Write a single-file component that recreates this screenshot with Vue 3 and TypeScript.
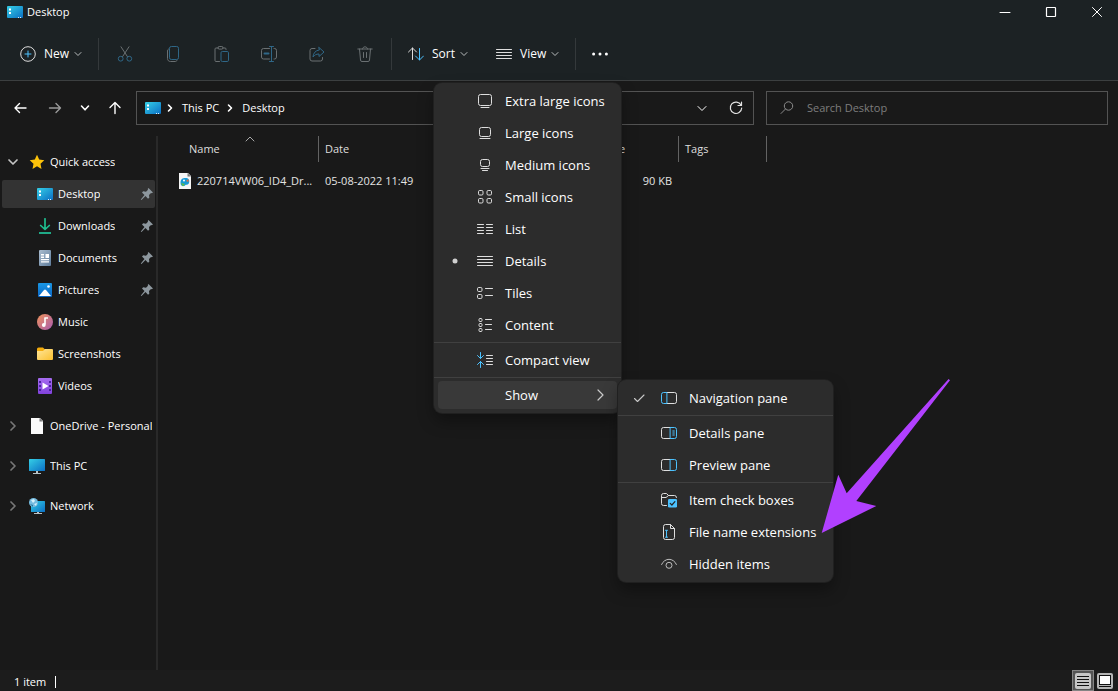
<script setup lang="ts">
import { h } from 'vue'

const W = '#dedede'
const B = '#4cc2ff'
const G = '#6a7072'
const D = '#2f6787'

const stroke = (color: string, d: string, width = 1) =>
  `<path d="${d}" fill="none" stroke="${color}" stroke-width="${width}" stroke-linecap="round" stroke-linejoin="round"/>`

const listLines = 'M.5 3.5h15M.5 6.5h15M.5 9.5h15M.5 12.5h15'

const art: Record<string, string> = {
  plus: `<circle cx="8" cy="8" r="7.3" fill="none" stroke="${W}"/>` + stroke(B, 'M8 5v6M5 8h6'),
  cut: stroke(G, 'M4 .8l6.4 9.8M12 .8L5.6 10.6') + `<circle cx="3.7" cy="12.7" r="2.4" fill="none" stroke="${D}"/><circle cx="12.3" cy="12.7" r="2.4" fill="none" stroke="${D}"/>`,
  copy: stroke(G, 'M3.500 3C2.900 3.4 2.500 4 2.500 5v7.500c0 1.8 1.200 3 3 3H10c1 0 1.700-.4 2-1') + `<rect x="4.500" y=".5" width="9" height="13" rx="1.800" fill="none" stroke="${D}"/>`,
  paste: stroke(G, 'M5.500 2H3a1 1 0 0 0-1 1v11.500a1 1 0 0 0 1 1h3.500M9.500 2H12a1 1 0 0 1 1 1v.500') + `<rect x="5" y=".5" width="5" height="2.600" rx="1.200" fill="none" stroke="${G}"/><rect x="8" y="5.500" width="7.500" height="10" rx="1.300" fill="none" stroke="${D}"/>`,
  rename: stroke(G, 'M8.500 2.500h-6a2 2 0 0 0-2 2v6.500a2 2 0 0 0 2 2h6M13 2.500h.500a2 2 0 0 1 2 2V11a2 2 0 0 1-2 2H13') + stroke(D, 'M3.500 7.500h4', 2) + stroke(D, 'M10.500.500v15M8.500.500h4M8.500 15.500h4'),
  share: stroke(G, 'M6 2.500H3a2 2 0 0 0-2 2V13a2 2 0 0 0 2 2h8.500a2 2 0 0 0 2-2v-1.500') + stroke(D, 'M10 1.500l5 4.500-5 4.500V8C7 8 5.500 9 4 11c.3-4 2.500-6.500 6-7z'),
  trash: stroke(G, 'M.8 3h14.400M5.500 3c0-3 5-3 5 0M2.500 3l1 11a1.500 1.500 0 0 0 1.500 1.500h6a1.500 1.500 0 0 0 1.500-1.500l1-11M6.500 6.500v5M9.500 6.500v5'),
  sort: stroke(W, 'M4.500 13.500V2M.5 6l4-4 4 4') + stroke(B, 'M11.500 2.500V14M7.500 10l4 4 4-4'),
  lines: stroke(W, listLines),
  dots: `<g fill="#fff"><circle cx="1.600" cy="8" r="1.500"/><circle cx="8" cy="8" r="1.500"/><circle cx="14.400" cy="8" r="1.500"/></g>`,
  down: stroke('#b8bcbd', 'M5 6.500l3 3 3-3'),
  downWide: stroke('#fff', 'M4 6.500l4 4 4-4'),
  downBold: stroke('#fff', 'M4.500 6l3.500 3.800L11.500 6', 1.6),
  downGrey: stroke('#c4c4c4', 'M4 6l4 4 4-4', 1.7),
  up: stroke('#a8a8a8', 'M4 10l4-4 4 4'),
  right: stroke('#fff', 'M6.500 5l3 3-3 3', 1.6),
  rightGrey: stroke('#777', 'M6 4l4 4-4 4', 1.7),
  rightThin: stroke('#c9c9c9', 'M6 3l5 5-5 5', 1.2),
  back: stroke('#fff', 'M13 8H2M6.500 3.500L2 8l4.500 4.500', 1.4),
  forward: stroke('#999', 'M2.500 8h11M9 3.500L13.500 8 9 12.500', 1.4),
  upArrow: stroke('#fff', 'M8 13.500V2.500M3 7.500l5-5 5 5', 1.4),
  refresh: stroke('#e3e3e3', 'M13 5A5.700 5.700 0 1 0 13.700 8M13.500 2v3.500H10', 1.2),
  search: `<circle cx="9.500" cy="6" r="4.200" fill="none" stroke="#8b8b8b"/>` + stroke('#8b8b8b', 'M6.500 9L2 13.500'),
  min: stroke('#fff', 'M3 8.500h10'),
  max: '<rect x="3.500" y="3.500" width="9" height="9" rx=".5" fill="none" stroke="#fff" stroke-width="1.200"/>',
  close: stroke('#fff', 'M3.500 3.500l9 9M12.500 3.500l-9 9'),
  check: stroke('#c9c9c9', 'M3.500 8.500l3 3 6.500-6.500', 1.1),
  bullet: '<circle cx="8" cy="8" r="2.500" fill="#d0d0d0"/>',
  extraLarge: `<rect x="1.500" y="1.500" width="13" height="11" rx="2" fill="none" stroke="${W}"/>` + stroke(W, 'M4 14.500h8'),
  large: `<rect x="2.500" y="2.500" width="11" height="9" rx="2" fill="none" stroke="${W}"/>` + stroke(W, 'M3 13.500h10'),
  medium: `<rect x="3.500" y="2.500" width="9" height="7" rx="2" fill="none" stroke="${W}"/>` + stroke(W, 'M4 11.500h8M5.500 13.500h5'),
  small: `<g fill="none" stroke="${W}"><rect x="1.500" y="1.500" width="4.500" height="4.500" rx="1.200"/><rect x="10" y="1.500" width="4.500" height="4.500" rx="1.200"/><rect x="1.500" y="9.500" width="4.500" height="4.500" rx="1.200"/><rect x="10" y="9.500" width="4.500" height="4.500" rx="1.200"/></g>`,
  list: stroke(W, 'M.5 3.500h6M9.500 3.500h6M.5 6.500h6M9.500 6.500h6M.5 9.500h6M9.500 9.500h6M.5 12.500h6M9.500 12.500h6'),
  tiles: `<g fill="none" stroke="${W}"><rect x=".5" y="2.500" width="4.500" height="4" rx="1.200"/><rect x=".5" y="9.500" width="4.500" height="4" rx="1.200"/></g>` + stroke(W, 'M8.500 3.500h7M8.500 10.500h7'),
  content: `<g fill="none" stroke="${W}"><rect x="2" y="1.500" width="3" height="3" rx="1"/><rect x="2" y="6.500" width="3" height="3" rx="1"/><rect x="2" y="11.500" width="3" height="3" rx="1"/></g>` + stroke(W, 'M8.500 2.500h6M8.500 7.500h6M8.500 12.500h6'),
  compact: stroke(B, 'M3.500.500v6M.500 3.500l3 3 3-3M3.500 15.500v-6M.500 12.500l3-3 3 3') + stroke(W, 'M9.500 3.500h6M9.500 6.500h6M9.500 9.500h6M9.500 12.500h6'),
  navPane: stroke(W, 'M5.500 2.500h8a2 2 0 0 1 2 2v7a2 2 0 0 1-2 2h-8') + stroke(B, 'M5.500 2.500h-3a2 2 0 0 0-2 2v7a2 2 0 0 0 2 2h3z'),
  detailsPane: stroke(W, 'M9.500 2.500h-7a2 2 0 0 0-2 2v7a2 2 0 0 0 2 2h7') + stroke(B, 'M9.500 2.500h4a2 2 0 0 1 2 2v7a2 2 0 0 1-2 2h-4zM11.800 6h1.500M11.800 8h1.500M11.800 10h1.500'),
  previewPane: stroke(W, 'M9.500 2.500h-7a2 2 0 0 0-2 2v7a2 2 0 0 0 2 2h7') + stroke(B, 'M9.500 2.500h4a2 2 0 0 1 2 2v7a2 2 0 0 1-2 2h-4z'),
  checkBoxes: stroke(W, 'M5.500 13.500h-3a2 2 0 0 1-2-2v-8a2 2 0 0 1 2-2h3l2 2h6a2 2 0 0 1 2 2M.500 5.500h4.500l2.500-2') + `<rect x="7" y="7" width="9" height="8.500" rx="1.300" fill="${B}"/>` + stroke('#222', 'M9.200 11.300l1.700 1.700 3-3.300', 1.2),
  extensions: stroke(W, 'M9.500.500h-5a2 2 0 0 0-2 2v11a2 2 0 0 0 2 2h7a2 2 0 0 0 2-2v-9l-4-4v4h4') + stroke(B, 'M5.500 6.500v6.500M4.500 6.300h2M4.500 13.200h2'),
  hidden: stroke('#bdbdbd', 'M.600 8.500C3.500 1.500 12.500 1.500 15.400 8.500') + '<circle cx="8" cy="9.300" r="3" fill="none" stroke="#bdbdbd"/>',
  desktop: '<rect x="0" y="2" width="16" height="12" rx="1" fill="url(#g-screen)"/><path d="M2 4.500h2v2H2zM2 8h2v2H2z" fill="#fff"/><path d="M11 13h1v1h-1zM13 13h1v1h-1z" fill="#d6efff"/>',
  star: '<path d="M8 .8l2.200 4.800 5.100.600-3.800 3.500 1 5.200L8 12.300l-4.500 2.600 1-5.200L.700 6.200l5.100-.600z" fill="#fcc20a"/>',
  download: stroke('#1fbe8f', 'M8 .800v10.500M3.700 7.500L8 11.500l4.300-4', 1.7) + '<path d="M2 14h12v2H2z" fill="#1fa986"/>',
  document: '<rect x="2" y="0" width="12" height="16" rx="1" fill="url(#g-doc)"/><path d="M4 4h3v1.500H4zM8.500 4H12v4H8.500zM4 6.500h3V8H4zM4 9h8v1.200H4zM4 11.200h8v1.200H4z" fill="#fff"/>',
  picture: '<rect x="1" y="1" width="14" height="14" rx="1" fill="url(#g-pic)"/><path d="M2 14l5-6q1-1 2 0l5 6z" fill="#fff"/><circle cx="11.500" cy="4.500" r="1.300" fill="#fff"/>',
  music: '<circle cx="8" cy="8" r="8" fill="url(#g-music)"/><path d="M8 3.500v7M7.500 4h3.500" stroke="#fff" stroke-width="1.600" fill="none"/><circle cx="6.800" cy="11" r="1.900" fill="#fff"/>',
  folder: '<path d="M0 3a1.500 1.500 0 0 1 1.500-1.500H6L8 3.500v3H0z" fill="#f3ab0c"/><path d="M0 5h6l2-2h7a1 1 0 0 1 1 1v9a1 1 0 0 1-1 1H1a1 1 0 0 1-1-1z" fill="url(#g-folder)"/>',
  video: '<rect x="1" y="0" width="14" height="16" rx="1" fill="url(#g-video)"/><path d="M2 3h2v2H2zM2 7h2v2H2zM2 11h2v2H2zM12 3h2v2h-2zM12 7h2v2h-2zM12 11h2v2h-2z" fill="#4a249c"/><path d="M5.500 4.500v7L11.500 8z" fill="#fff"/>',
  file: '<path d="M2 0h9l3 3v13H2z" fill="#fafafa"/><path d="M10.500 0L14 3.500h-3.500z" fill="#777"/>',
  pc: '<rect x="0" y="1" width="16" height="12" rx=".6" fill="url(#g-screen)"/><path d="M7 13h2v2h3v1H4v-1h3z" fill="#b8c3c8"/>',
  network: '<rect x="2" y="3" width="14" height="11" rx=".6" fill="url(#g-screen)"/><path d="M8 14h2v1h3v1H5v-1h3z" fill="#b8c3c8"/><circle cx="4.500" cy="4.500" r="4.500" fill="#75bce0"/><path d="M2 2l3-1 1 2-2 2zM5 6l3-1-1 3z" fill="#d5f2fc"/><path d="M1 6l3 1v2z" fill="#26789f"/>',
  image: '<path d="M0 0h9l3 3v13H0z" fill="#f5f5f5"/><path d="M8.500 0L12 3.500H8.500z" fill="#777"/><path d="M1.500 10c0-4 2-5 5-5 3 0 4.500 2 3.500 5-1 2.500-3 1-4 2.500-1 1-4.500 1-4.500-2.500z" fill="#189ad6"/><path d="M7 8l2.500-2v3z" fill="#ec6a3a"/><path d="M2 10l4 1-2 2.500z" fill="#63bd45"/><circle cx="5" cy="7.500" r="1" fill="#fff"/>',
  pin: '<path d="M9.500 2l4.500 4.500-1.500.800-.500-.300-2 2 .3 2.700-1.300 1L6.500 10 2.500 14l-.700-.500L5.500 9 3 6.500l1.200-1.200L7 5.700l2-2-.3-.7z" fill="#8d979e"/>',
  viewDetails: '<rect x="0" y="0" width="16" height="16" rx="2" fill="#c6c6c6"/><path d="M2 3.500h12M2 6.500h12M2 9.500h12M2 12.500h12" stroke="#111" fill="none"/>',
  viewIcons: '<rect x="0" y="0" width="16" height="16" rx="2" fill="#b5b5b5"/><rect x="2.500" y="2.500" width="11" height="9" fill="#fff" stroke="#111"/><path d="M2 13.500h12" stroke="#111"/>',
}

const Icon = (props: { name: string }) =>
  h('svg', { class: 'icon', viewBox: '0 0 16 16', width: 16, height: 16, 'aria-hidden': 'true', innerHTML: art[props.name] })
Icon.props = ['name']

const tools = [
  { icon: 'cut', label: 'Cut' },
  { icon: 'copy', label: 'Copy' },
  { icon: 'paste', label: 'Paste' },
  { icon: 'rename', label: 'Rename' },
  { icon: 'share', label: 'Share' },
  { icon: 'trash', label: 'Delete' },
]

const pinned = [
  { icon: 'desktop', label: 'Desktop', pin: true, active: true },
  { icon: 'download', label: 'Downloads', pin: true },
  { icon: 'document', label: 'Documents', pin: true },
  { icon: 'picture', label: 'Pictures', pin: true },
  { icon: 'music', label: 'Music' },
  { icon: 'folder', label: 'Screenshots' },
  { icon: 'video', label: 'Videos' },
]

const roots = [
  { icon: 'file', label: 'OneDrive - Personal' },
  { icon: 'pc', label: 'This PC' },
  { icon: 'network', label: 'Network' },
]

interface Entry { icon?: string; label: string; mark?: string; arrow?: boolean }

const viewMenu: Entry[][] = [
  [
    { icon: 'extraLarge', label: 'Extra large icons' },
    { icon: 'large', label: 'Large icons' },
    { icon: 'medium', label: 'Medium icons' },
    { icon: 'small', label: 'Small icons' },
    { icon: 'list', label: 'List' },
    { icon: 'lines', label: 'Details', mark: 'bullet' },
    { icon: 'tiles', label: 'Tiles' },
    { icon: 'content', label: 'Content' },
  ],
  [{ icon: 'compact', label: 'Compact view' }],
  [{ label: 'Show', arrow: true }],
]

const showMenu: Entry[][] = [
  [{ icon: 'navPane', label: 'Navigation pane', mark: 'check' }],
  [
    { icon: 'detailsPane', label: 'Details pane' },
    { icon: 'previewPane', label: 'Preview pane' },
  ],
  [
    { icon: 'checkBoxes', label: 'Item check boxes' },
    { icon: 'extensions', label: 'File name extensions' },
    { icon: 'hidden', label: 'Hidden items' },
  ],
]

const menus = [
  { name: 'view-menu', groups: viewMenu },
  { name: 'show-menu', groups: showMenu },
]
</script>

<template>
  <div class="window">
    <svg class="defs" width="0" height="0" aria-hidden="true">
      <defs>
        <linearGradient id="g-screen" x1="0" y1="0" x2="1" y2="1"><stop offset="0" stop-color="#35cfe6" /><stop offset="1" stop-color="#0b6fc4" /></linearGradient>
        <linearGradient id="g-doc" x1="0" y1="0" x2="1" y2="1"><stop offset="0" stop-color="#a9bccf" /><stop offset="1" stop-color="#5f7d9c" /></linearGradient>
        <linearGradient id="g-pic" x1="0" y1="0" x2="0" y2="1"><stop offset="0" stop-color="#1a97e4" /><stop offset="1" stop-color="#0a66c4" /></linearGradient>
        <linearGradient id="g-music" x1="0" y1="0" x2="1" y2="1"><stop offset="0" stop-color="#f0935a" /><stop offset="1" stop-color="#a85bb0" /></linearGradient>
        <linearGradient id="g-folder" x1="0" y1="0" x2="1" y2="1"><stop offset="0" stop-color="#ffe69a" /><stop offset="1" stop-color="#fbc02f" /></linearGradient>
        <linearGradient id="g-video" x1="0" y1="0" x2="0" y2="1"><stop offset="0" stop-color="#a66cf0" /><stop offset="1" stop-color="#8142dc" /></linearGradient>
      </defs>
    </svg>

    <header class="top">
      <div class="titlebar">
        <Icon name="desktop" />
        <h1>Desktop</h1>
        <div class="controls">
          <button aria-label="Minimize"><Icon name="min" /></button>
          <button aria-label="Maximize"><Icon name="max" /></button>
          <button aria-label="Close"><Icon name="close" /></button>
        </div>
      </div>
      <div class="toolbar">
        <button class="tool new"><Icon name="plus" /><span>New</span><Icon name="down" /></button>
        <span class="rule"></span>
        <button v-for="t in tools" :key="t.icon" class="tool square" :aria-label="t.label"><Icon :name="t.icon" /></button>
        <span class="rule"></span>
        <button class="tool sort"><Icon name="sort" /><span>Sort</span><Icon name="down" /></button>
        <button class="tool view" aria-expanded="true"><Icon name="lines" /><span>View</span><Icon name="down" /></button>
        <span class="rule"></span>
        <button class="tool more" aria-label="See more"><Icon name="dots" /></button>
      </div>
    </header>

    <div class="location">
      <nav class="history" aria-label="History">
        <button aria-label="Back"><Icon name="back" /></button>
        <button aria-label="Forward"><Icon name="forward" /></button>
        <button class="recent" aria-label="Recent locations"><Icon name="downBold" /></button>
        <button aria-label="Up"><Icon name="upArrow" /></button>
      </nav>
      <div class="address">
        <Icon name="desktop" />
        <Icon name="right" class="crumb" />
        <a href="#pc">This PC</a>
        <Icon name="right" class="crumb" />
        <a href="#desktop">Desktop</a>
        <div class="address-actions">
          <button aria-label="Previous locations"><Icon name="downWide" /></button>
          <button aria-label="Refresh"><Icon name="refresh" /></button>
        </div>
      </div>
      <label class="search">
        <Icon name="search" />
        <input type="search" placeholder="Search Desktop" aria-label="Search Desktop" />
      </label>
    </div>

    <div class="body">
      <nav class="sidebar" aria-label="Folders">
        <a class="node" href="#quick"><Icon name="downGrey" class="twist" /><Icon name="star" /><span>Quick access</span></a>
        <a v-for="p in pinned" :key="p.label" class="node child" :class="{ active: p.active }" href="#folder">
          <Icon :name="p.icon" /><span>{{ p.label }}</span><Icon v-if="p.pin" name="pin" class="pin" />
        </a>
        <a v-for="r in roots" :key="r.label" class="node root" href="#root">
          <Icon name="rightGrey" class="twist" /><Icon :name="r.icon" /><span>{{ r.label }}</span>
        </a>
      </nav>
      <main class="files">
        <table>
          <colgroup><col class="c-name" /><col class="c-date" /><col class="c-size" /><col class="c-tags" /><col /></colgroup>
          <thead>
            <tr>
              <th scope="col" class="name-head">Name<Icon name="up" class="sorted" /></th>
              <th scope="col">Date</th>
              <th scope="col">Size</th>
              <th scope="col">Tags</th>
              <td></td>
            </tr>
          </thead>
          <tbody>
            <tr>
              <td><div class="file"><Icon name="image" /><span>220714VW06_ID4_Dr...</span></div></td>
              <td>05-08-2022 11:49</td>
              <td class="size">90 KB</td>
              <td></td>
              <td></td>
            </tr>
          </tbody>
        </table>
      </main>
    </div>

    <footer class="status">
      <div class="count"><span>1 item</span><span class="tick"></span></div>
      <div class="modes">
        <button class="on" aria-label="Details view"><Icon name="viewDetails" /></button>
        <button aria-label="Large icons view"><Icon name="viewIcons" /></button>
      </div>
    </footer>

    <div v-for="m in menus" :key="m.name" class="menu" :class="m.name" role="menu">
      <div v-for="(g, i) in m.groups" :key="i" class="group" role="group">
        <button v-for="e in g" :key="e.label" class="item" :class="{ open: e.arrow }" role="menuitem">
          <span class="slot"><Icon v-if="e.mark" :name="e.mark" /></span>
          <span class="slot"><Icon v-if="e.icon" :name="e.icon" /></span>
          <span class="text">{{ e.label }}</span>
          <Icon v-if="e.arrow" name="rightThin" />
        </button>
      </div>
    </div>

    <svg class="pointer" width="130" height="156" viewBox="0 0 130 156" aria-hidden="true">
      <polygon points="0.700,155 17.300,96.700 25.700,115.300 127.600,1 129,2.300 35.300,123 55.300,128" fill="#b140ff" />
    </svg>
  </div>
</template>

<style>
body {
  margin: 0;
  background: #191919;
}
</style>

<style scoped>
.window {
  position: relative;
  display: flex;
  flex-direction: column;
  min-height: 100vh;
  overflow: hidden;
  background: #191919;
  color: #fff;
  font: 11px/16px "Open Sans", "Noto Sans", sans-serif;
}
.defs {
  position: absolute;
}
.icon {
  flex: none;
  display: block;
}
button {
  display: flex;
  align-items: center;
  justify-content: center;
  padding: 0;
  border: 0;
  background: none;
  color: inherit;
  font: inherit;
}
a {
  color: inherit;
  text-decoration: none;
}
.top {
  background: #1c2224;
  border-bottom: 1px solid #3c3f40;
}
.titlebar {
  display: flex;
  align-items: center;
  gap: 4px;
  height: 24px;
  padding: 0 0 0 7px;
}
h1 {
  margin: 0;
  font: inherit;
}
.controls {
  display: flex;
  gap: 4px;
  margin-left: auto;
}
.controls button {
  width: 42px;
  height: 24px;
}
.toolbar {
  display: flex;
  align-items: center;
  height: 52px;
  padding: 4px 0 0 8px;
  font-size: 12px;
}
.tool {
  height: 32px;
}
.tool span {
  margin: 0 1px 0 8px;
  font-weight: 500;
}
.new {
  width: 90px;
  justify-content: flex-start;
  padding-left: 12px;
}
.square {
  width: 48px;
}
.more {
  width: 44px;
}
.rule {
  width: 1px;
  height: 32px;
  margin-right: 2px;
  background: #34393b;
}
.sort,
.view {
  width: 88px;
  justify-content: flex-start;
  padding-left: 14px;
}
.view {
  width: 93px;
}
.square + .rule {
  margin-left: 2px;
}
.location {
  display: grid;
  grid-template-columns: 136px minmax(0, 618fr) minmax(0, 354fr);
  padding: 10px 10px 11px 0;
}
.history {
  display: flex;
  align-items: center;
  padding-left: 4px;
}
.history button {
  width: 34px;
  height: 32px;
}
.history .recent {
  width: 26px;
}
.address {
  display: flex;
  align-items: center;
  height: 32px;
  padding: 0 8px;
  border: 1px solid #535353;
}
.crumb {
  margin: 0 2px 0 1px;
}
.address a {
  margin: 0 2px;
}
.address-actions {
  display: flex;
  margin-left: auto;
}
.address-actions button {
  width: 34px;
  height: 32px;
}
.address-actions button:last-child {
  width: 18px;
  margin-left: 8px;
}
.search {
  display: flex;
  align-items: center;
  gap: 12px;
  margin-left: 12px;
  padding: 0 12px;
  border: 1px solid #535353;
}
.search input {
  flex: 1;
  min-width: 0;
  padding: 0;
  border: 0;
  outline: 0;
  background: none;
  color: #fff;
  font: inherit;
}
.search input::placeholder {
  color: #7d7d7d;
  opacity: 1;
}
.body {
  display: flex;
  flex: 1;
}
.sidebar {
  flex: 0 0 158px;
  box-sizing: border-box;
  min-width: 0;
  display: flex;
  flex-direction: column;
  padding: 12px 1px 0 2px;
  border-right: 2px solid #292929;
}
.node {
  display: flex;
  align-items: center;
  height: 28px;
  margin: 0 0 4px;
  padding-left: 3px;
  border-radius: 2px;
  white-space: nowrap;
}
.node span {
  margin-left: 5px;
  overflow: hidden;
}
.twist {
  margin-right: 8px;
}
.child {
  padding-left: 35px;
}
.active {
  background: #333;
}
.root {
  margin-top: 8px;
}
.pin {
  margin-left: auto;
}
.files {
  flex: 1;
  min-width: 0;
}
table {
  width: 100%;
  table-layout: fixed;
  border-collapse: separate;
  border-spacing: 0;
}
.c-name {
  width: 161px;
}
.c-date {
  width: 280px;
}
.c-size {
  width: 80px;
}
.c-tags {
  width: 88px;
}
th,
td {
  padding: 0 7px 0 6px;
  text-align: left;
  white-space: nowrap;
}
th {
  position: relative;
  height: 26px;
  border-right: 1px solid #636363;
  color: #dedede;
  font-weight: 400;
}
th:nth-child(2) {
  border-right: 0;
}
thead .name-head {
  padding-left: 31px;
}
.sorted {
  position: absolute;
  top: -5px;
  left: 84px;
}
tbody td {
  height: 38px;
  color: #e4e4e4;
}
tbody td:first-child {
  padding: 0 0 0 21px;
}
.file {
  display: flex;
  align-items: center;
  gap: 2px;
}
td.size {
  text-align: right;
}
.status {
  display: flex;
  align-items: center;
  height: 21px;
  padding-left: 14px;
  background: #1c1c1c;
}
.count {
  display: flex;
  align-items: center;
  gap: 9px;
  padding-top: 2px;
}
.tick {
  width: 1px;
  height: 12px;
  background: #fff;
}
.modes {
  display: flex;
  gap: 2px;
  height: 21px;
  margin-left: auto;
  padding-right: 4px;
}
.modes button {
  width: 18px;
}
.modes .on {
  width: 22px;
  border: 1px solid #858585;
  background: #555;
}
.menu {
  position: absolute;
  padding: 2px 0;
  border-radius: 8px;
  background: #2c2c2c;
  box-shadow: 0 0 0 1px #202020, 0 8px 16px rgb(0 0 0 / 35%);
  font-size: 13px;
  line-height: 20px;
}
.view-menu {
  top: 83px;
  left: 434px;
  width: 187px;
}
.show-menu {
  top: 380px;
  left: 618px;
  width: 215px;
}
.group {
  display: flex;
  flex-direction: column;
  gap: 4px;
  padding: 2px 4px;
}
.group + .group {
  margin-top: 1px;
  padding-top: 3px;
  border-top: 1px solid #404040;
}
.item {
  justify-content: flex-start;
  height: 28px;
  padding: 0 9px;
  border-radius: 4px;
  white-space: nowrap;
}
.slot {
  flex: none;
  width: 16px;
  height: 16px;
}
.slot + .slot {
  margin: 0 12px 0 14px;
}
.text {
  flex: 1;
  text-align: left;
}
.open {
  background: #393939;
}
.pointer {
  position: absolute;
  top: 378px;
  left: 821px;
}
</style>
